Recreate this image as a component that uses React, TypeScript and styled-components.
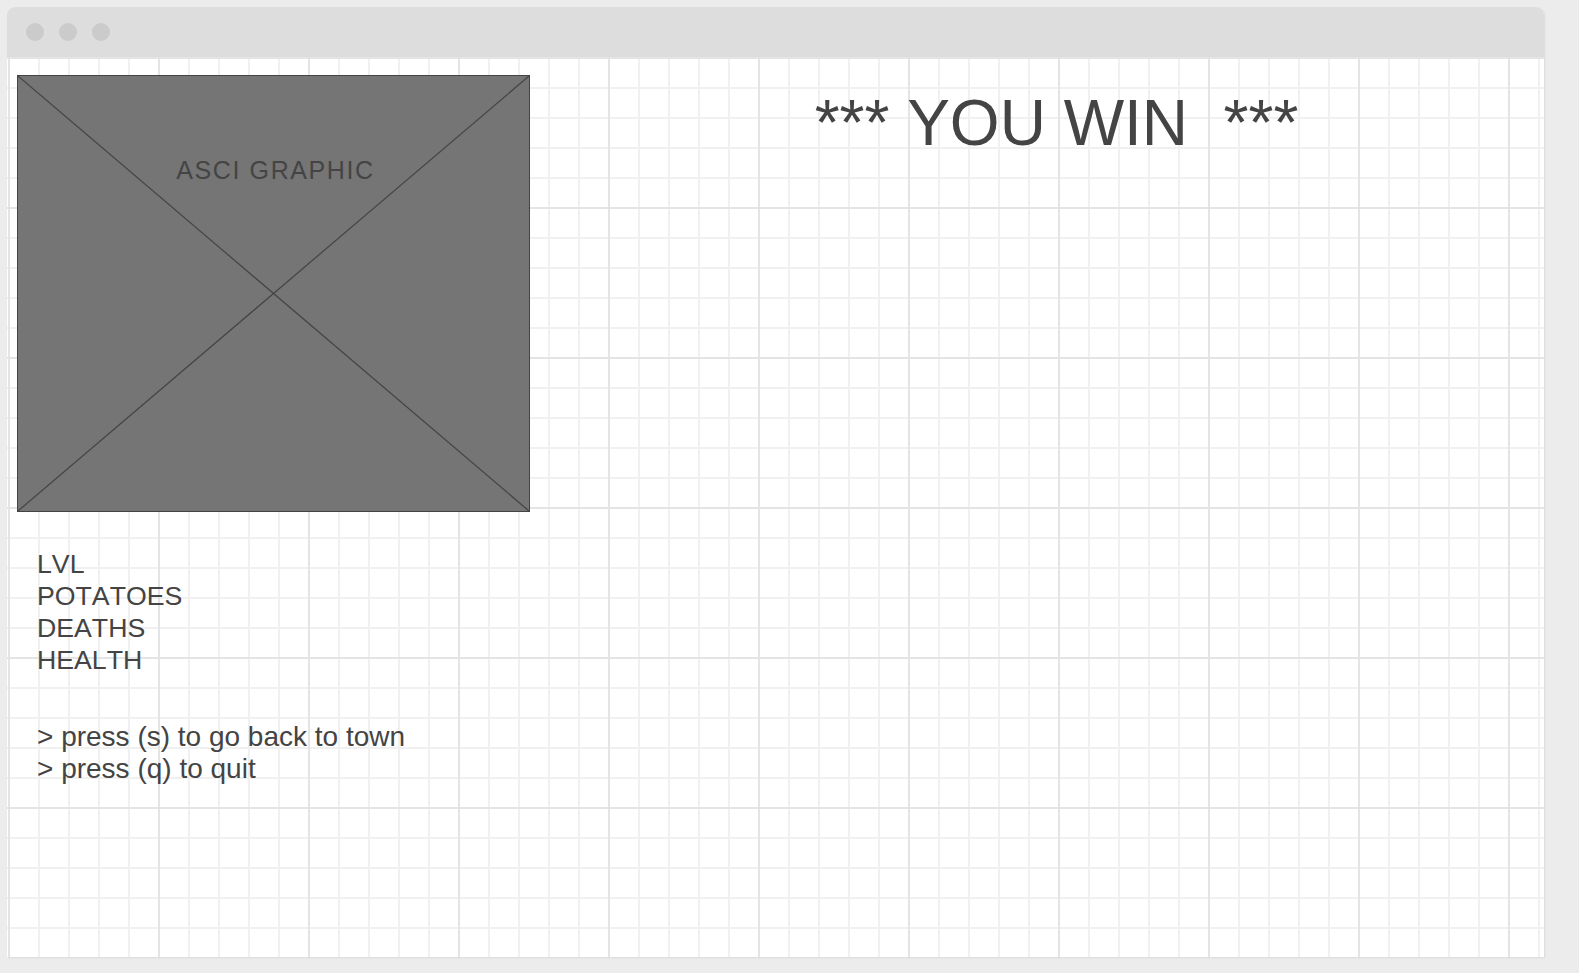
import React from 'react';
import styled, {createGlobalStyle} from 'styled-components';

const GlobalStyle = createGlobalStyle`
  html, body {
    margin: 0;
    padding: 0;
    background: #ececec;
    font-family: "Liberation Sans", Arial, sans-serif;
    font-kerning: none;
    color: #444444;
  }
`;

const Page = styled.div`
  padding: 7px 35px 16px 7px;
`;

const Window = styled.div`
  display: flex;
  flex-direction: column;
  height: 950px;
  background: #ffffff;
  border-radius: 8px 8px 0 0;
  box-shadow: 1px 1px 2px rgba(0, 0, 0, 0.08);
  overflow: hidden;
`;

const TitleBar = styled.div`
  display: flex;
  align-items: center;
  gap: 15px;
  height: 50px;
  flex: 0 0 50px;
  padding-left: 19px;
  background: #dddddd;
`;

const Dot = styled.span`
  width: 18px;
  height: 18px;
  border-radius: 50%;
  background: #cbcbcb;
`;

// draw.io style grid: thin line every 30px, darker one every 150px
const Canvas = styled.div`
  flex: 1 1 auto;
  display: flex;
  padding: 18px 0 0 10px;
  background-color: #ffffff;
  background-image:
    linear-gradient(to right, #e4e4e4 0 2px, transparent 2px),
    linear-gradient(to bottom, #e4e4e4 0 2px, transparent 2px),
    linear-gradient(to right, #f0f0f0 0 2px, transparent 2px),
    linear-gradient(to bottom, #f0f0f0 0 2px, transparent 2px);
  background-size: 150px 150px, 150px 150px, 30px 30px, 30px 30px;
  background-position: 1px 0;
`;

const LeftColumn = styled.div`
  display: flex;
  flex-direction: column;
  width: 513px;
  flex: 0 0 513px;
`;

const Placeholder = styled.div`
  position: relative;
  box-sizing: border-box;
  width: 513px;
  height: 437px;
  background: #757575;
  border: 1px solid #444444;
  display: flex;
  justify-content: center;
  padding-left: 4px;
`;

const Cross = styled.svg`
  position: absolute;
  inset: 0;
  width: 100%;
  height: 100%;
`;

const PlaceholderLabel = styled.span`
  position: relative;
  margin-top: 79px;
  font-size: 25px;
  line-height: 30px;
  letter-spacing: 1.6px;
  color: #444444;
`;

const Stats = styled.div`
  margin-top: 37px;
  padding-left: 20px;
  font-size: 26.7px;
  line-height: 31.9px;
`;

const Prompts = styled.div`
  margin-top: 44px;
  padding-left: 20px;
  font-size: 28px;
  line-height: 32.2px;
`;

const Line = styled.div`
  white-space: pre;
`;

const RightPanel = styled.div`
  flex: 1 1 auto;
  display: flex;
  justify-content: center;
  padding: 16px 0 0 39px;
`;

const Heading = styled.h1`
  margin: 0;
  font-weight: normal;
  font-size: 64px;
  line-height: 64px;
  white-space: pre;
  color: #444444;
`;

const stats = ['LVL', 'POTATOES', 'DEATHS', 'HEALTH'];
const prompts = ['> press (s) to go back to town', '> press (q) to quit'];

const App = () => {
  return (
    <Page>
      <GlobalStyle/>
      <Window>
        <TitleBar>
          <Dot/>
          <Dot/>
          <Dot/>
        </TitleBar>
        <Canvas>
          <LeftColumn>
            <Placeholder>
              <Cross viewBox="0 0 100 100" preserveAspectRatio="none">
                <line x1="0" y1="0" x2="100" y2="100" stroke="#444444" strokeWidth="1.2" vectorEffect="non-scaling-stroke"/>
                <line x1="100" y1="0" x2="0" y2="100" stroke="#444444" strokeWidth="1.2" vectorEffect="non-scaling-stroke"/>
              </Cross>
              <PlaceholderLabel>ASCI GRAPHIC</PlaceholderLabel>
            </Placeholder>
            <Stats>
              {stats.map((s) => <Line key={s}>{s}</Line>)}
            </Stats>
            <Prompts>
              {prompts.map((p) => <Line key={p}>{p}</Line>)}
            </Prompts>
          </LeftColumn>
          <RightPanel>
            <Heading>{'*** YOU WIN  ***'}</Heading>
          </RightPanel>
        </Canvas>
      </Window>
    </Page>
  );
};

export default App;
